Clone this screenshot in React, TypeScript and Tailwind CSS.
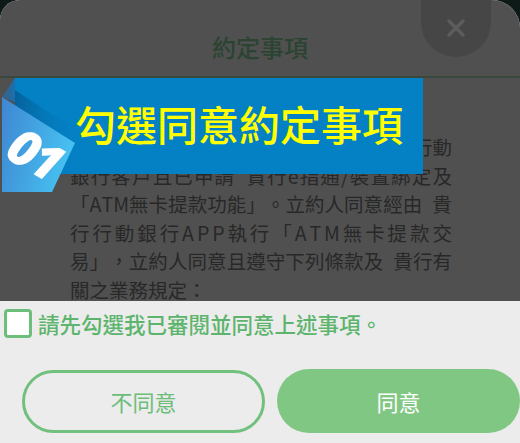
import React from "react";

const lines: string[] = [
  "立約人茲聲明本人為已開立 貴行帳戶之行動",
  "銀行客戶且已申請 貴行e指通/裝置綁定及",
  "「ATM無卡提款功能」。立約人同意經由 貴",
  "行行動銀行APP執行「ATM無卡提款交",
  "易」，立約人同意且遵守下列條款及 貴行有",
];

function JustifiedLine({ text }: { text: string }) {
  const chars = Array.from(text);
  return (
    <div className="flex justify-between whitespace-nowrap">
      {chars.map((c, i) =>
        c === " " ? (
          <span key={i} className="inline-block w-[10px]" />
        ) : (
          <span key={i}>{c}</span>
        )
      )}
    </div>
  );
}

export default function App() {
  return (
    <div
      className="relative w-[520px] h-[443px] overflow-hidden bg-[#0e1a17]"
      style={{ fontFamily: '"Noto Sans CJK TC", "Noto Sans", sans-serif' }}
    >
      <div className="flex flex-col h-full rounded-tl-[20px] rounded-tr-[28px] overflow-hidden bg-[#ececec]">
        {/* dimmed upper part */}
        <div className="h-[301px] bg-[#505050] flex flex-col shrink-0">
          <div className="relative h-[78px] border-b-2 border-[#3a473d] flex justify-center shrink-0">
            <span className="mt-[32px] text-[24px] leading-[30px] text-[#2b4431] font-medium">
              約定事項
            </span>
            <div className="absolute right-[29px] top-0 w-[70px] h-[57px] rounded-b-[35px] bg-[#464646] flex items-center justify-center">
              <svg width="20" height="20" viewBox="0 0 20 20" className="-mt-[2px]">
                <path
                  d="M3 3 L17 17 M17 3 L3 17"
                  stroke="#5c5c5c"
                  strokeWidth="3.5"
                  strokeLinecap="round"
                />
              </svg>
            </div>
          </div>
          <div className="pl-[70px] pr-[68px] pt-[55px] text-[19.5px] leading-[28.6px] text-[#282828]">
            {lines.map((l, i) => (
              <JustifiedLine key={i} text={l} />
            ))}
            <div className="whitespace-nowrap">關之業務規定：</div>
          </div>
        </div>

        {/* lower part */}
        <div className="flex flex-col pt-[8px]">
          <div className="flex items-center gap-[6px] pl-[4px]">
            <div className="w-[28px] h-[29px] rounded-[4px] border-[3px] border-[#6cbf7a] bg-white" />
            <span className="text-[21.5px] leading-[29px] font-medium text-[#5db46c]">
              請先勾選我已審閱並同意上述事項。
            </span>
          </div>
          <div className="flex gap-[12px] pl-[22px] mt-[32px]">
            <button className="w-[243px] h-[63px] rounded-full border-[3px] border-[#72c07e] bg-transparent flex items-center justify-center text-[22px] text-[#6cbd79]">
              不同意
            </button>
            <button className="w-[243px] h-[64px] -mt-[1px] rounded-full bg-[#81c784] flex items-center justify-center text-[22px] text-white">
              同意
            </button>
          </div>
        </div>
      </div>

      {/* tutorial banner overlay */}
      <div className="absolute left-[15px] top-[78px] w-[408px] h-[96px] bg-[#0480c4] flex items-center pl-[60px] pb-[6px]">
        <span className="text-[41px] leading-[48px] font-medium text-[#ffff00] whitespace-nowrap">
          勾選同意約定事項
        </span>
      </div>
      <svg
        className="absolute left-0 top-[78px]"
        width="80"
        height="116"
        viewBox="0 0 80 116"
      >
        <defs>
          <linearGradient id="rib" x1="0" y1="0" x2="1" y2="0.3">
            <stop offset="0" stopColor="#3f86d2" />
            <stop offset="1" stopColor="#46c0f0" />
          </linearGradient>
          <linearGradient id="fold" x1="0" y1="0" x2="1" y2="0">
            <stop offset="0" stopColor="#3b5f80" />
            <stop offset="1" stopColor="#1c6fb0" />
          </linearGradient>
          <linearGradient id="sh" x1="0" y1="0" x2="1" y2="0">
            <stop offset="0" stopColor="#03558a" stopOpacity="0.7" />
            <stop offset="1" stopColor="#0480c4" stopOpacity="0" />
          </linearGradient>
        </defs>
        <polygon points="15,0 15,24 2,19" fill="url(#fold)" />
        <polygon points="15,12 80,55 80,96 15,96" fill="url(#sh)" />
        <polygon points="2,19 75,65 52,114 2,114" fill="url(#rib)" />
        <text
          x="35"
          y="75"
          transform="rotate(30 35 75)"
          textAnchor="middle"
          dominantBaseline="central"
          fontSize="50"
          fontStyle="italic"
          fontWeight="800"
          letterSpacing="-3"
          fill="#ffffff"
          fontFamily='"Open Sans", "DejaVu Sans", sans-serif'
        >
          01
        </text>
      </svg>
    </div>
  );
}
